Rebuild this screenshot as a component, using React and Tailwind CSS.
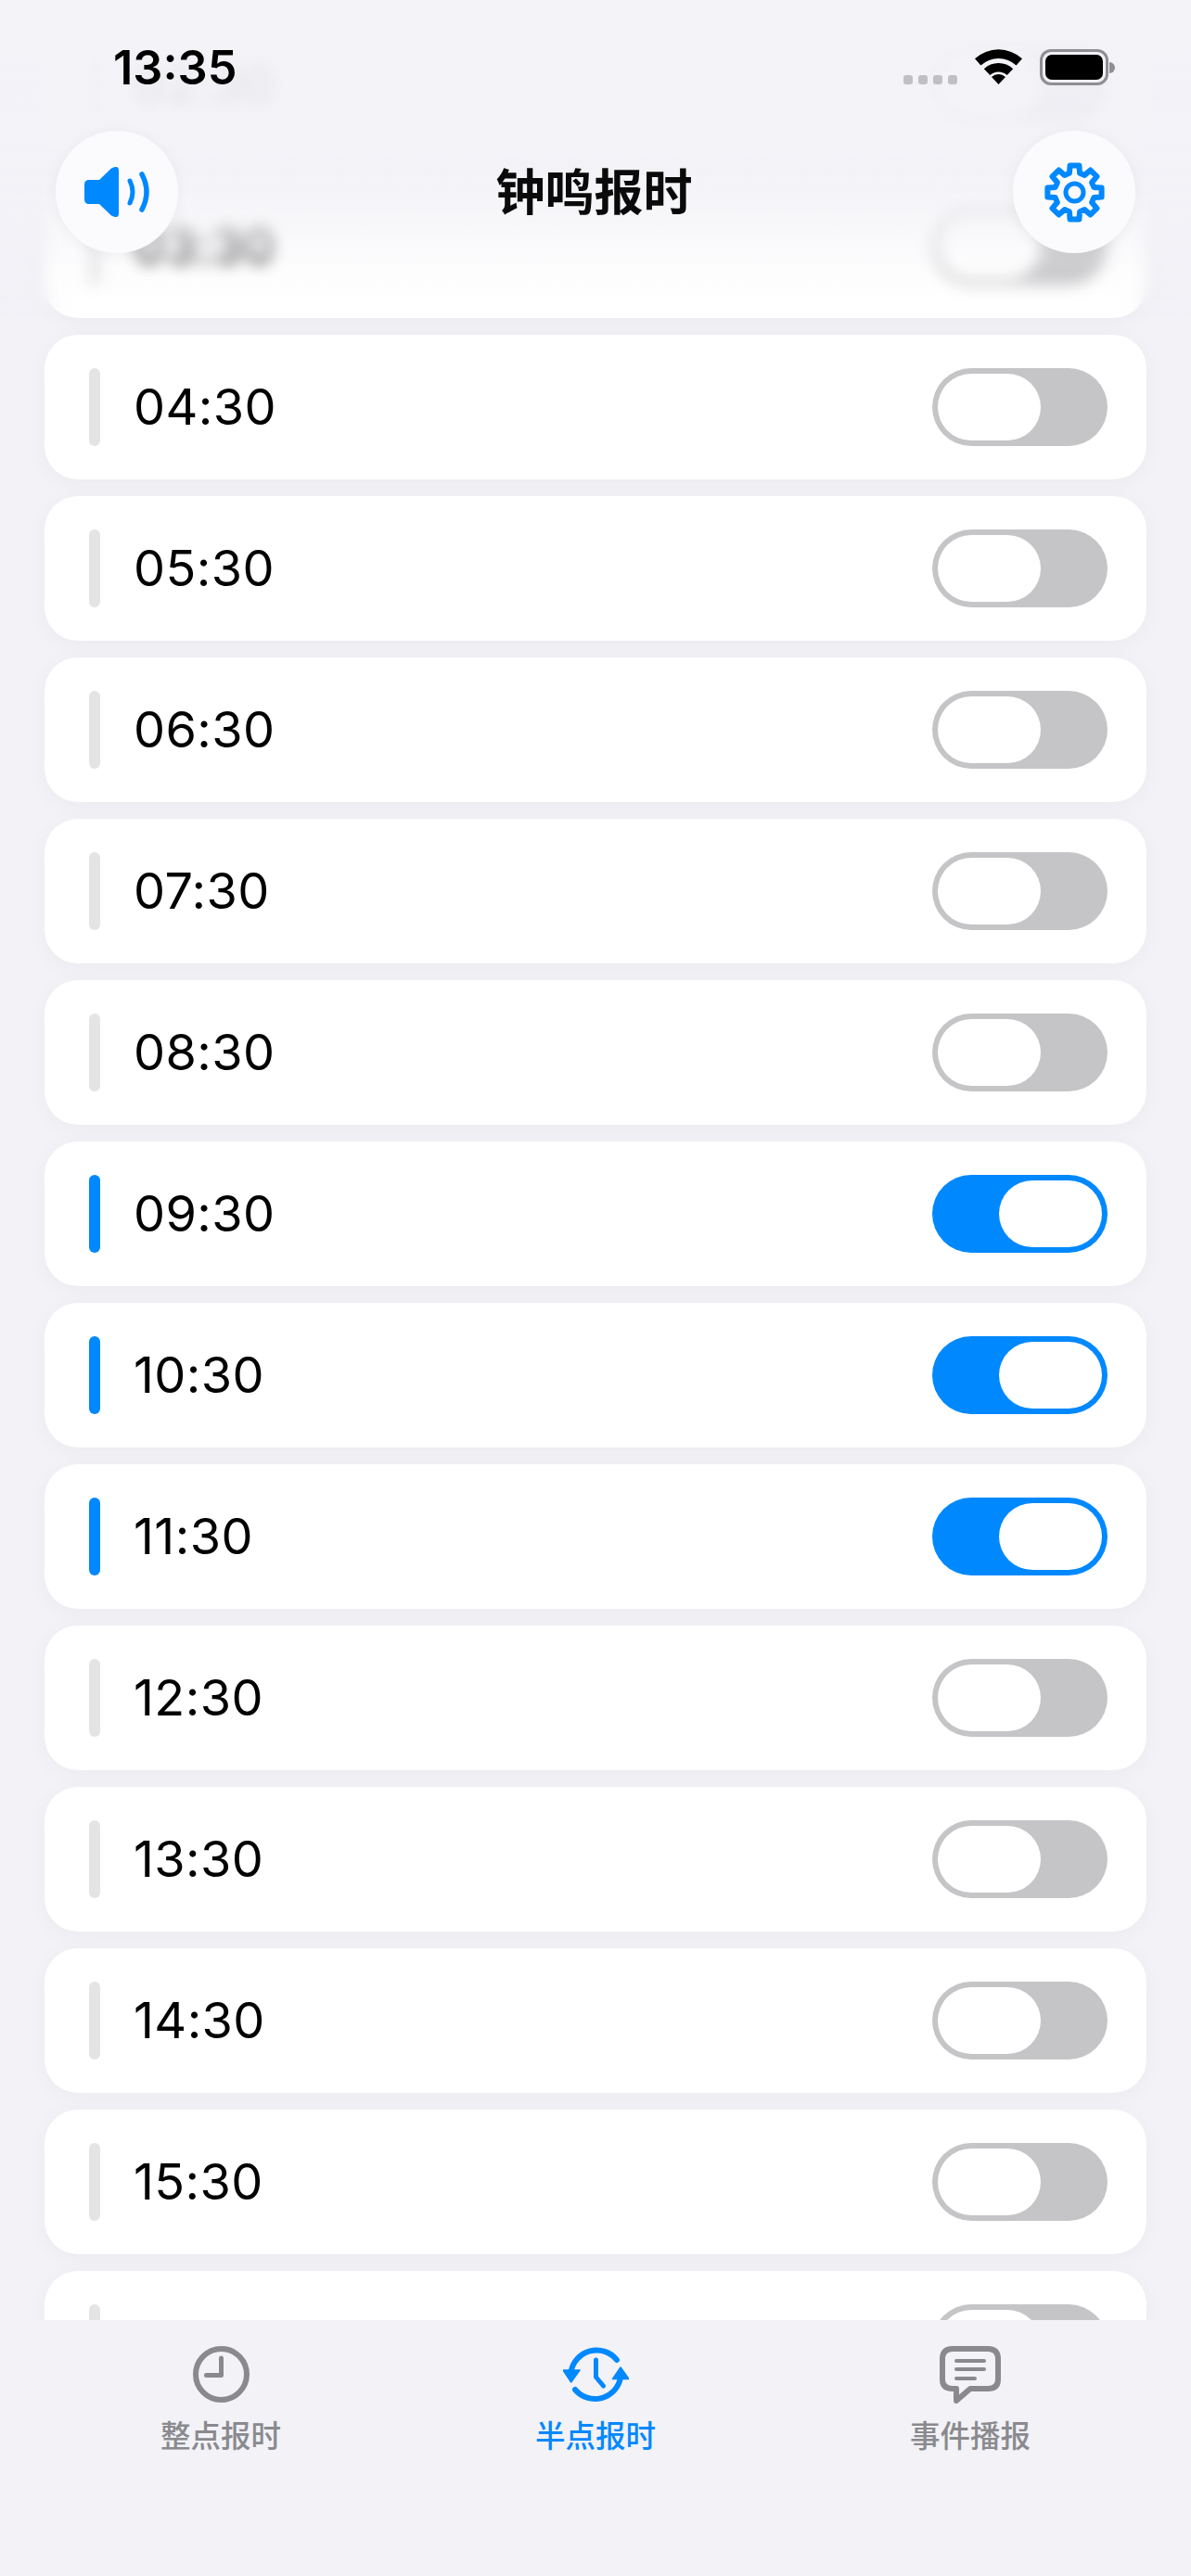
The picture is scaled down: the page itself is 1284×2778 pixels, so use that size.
import React from "react";

const BLUE = "#0088ff";
const rows = [
    { time: "02:30" },
    { time: "03:30" },
    { time: "04:30" },
    { time: "05:30" },
    { time: "06:30" },
    { time: "07:30" },
    { time: "08:30" },
    { time: "09:30", on: true },
    { time: "10:30", on: true },
    { time: "11:30", on: true },
    { time: "12:30" },
    { time: "13:30" },
    { time: "14:30" },
    { time: "15:30" },
    { time: "16:30" },
];

// 8 tooth gear outline, centre line of the stroke
function gearPath(cx, cy) {
    const pts = [];
    for (let i = 0; i < 8; i++) {
        const a = (i * 45 - 90) * (Math.PI / 180);
        const base = 15 * (Math.PI / 180);
        const tip = 9.5 * (Math.PI / 180);
        pts.push([cx + 21.5 * Math.cos(a - base), cy + 21.5 * Math.sin(a - base)]);
        pts.push([cx + 29.5 * Math.cos(a - tip), cy + 29.5 * Math.sin(a - tip)]);
        pts.push([cx + 29.5 * Math.cos(a + tip), cy + 29.5 * Math.sin(a + tip)]);
        pts.push([cx + 21.5 * Math.cos(a + base), cy + 21.5 * Math.sin(a + base)]);
    }
    return "M" + pts.map((p) => p[0].toFixed(1) + " " + p[1].toFixed(1)).join("L") + "Z";
}

function Speaker() {
    return (
        <svg width="71" height="54" viewBox="0 0 71 54" fill="none">
            <path
                d="M5 14H16L29 1.5Q37 -2.5 37 4V50Q37 56.5 29 52.5L16 40H5Q0 40 0 35V19Q0 14 5 14Z"
                fill={BLUE}
            />
            <path d="M49 15Q55 27 49 39" stroke={BLUE} strokeWidth="5" strokeLinecap="round" />
            <path d="M62 8Q72 27 62 46" stroke={BLUE} strokeWidth="5.5" strokeLinecap="round" />
        </svg>
    );
}

function Gear() {
    return (
        <svg width="65" height="65" viewBox="0 0 65 65" fill="none" stroke={BLUE}>
            <path d={gearPath(32.5, 32.5)} strokeWidth="6" strokeLinejoin="round" />
            <circle cx="32.5" cy="32.5" r="9.5" strokeWidth="5" />
        </svg>
    );
}

function Wifi() {
    return (
        <svg width="51" height="38" viewBox="0 0 51 38" fill="#000">
            <path d="M0 10.2A38 38 0 0 1 51 10.2L44.6 17.5A28 28 0 0 0 6.4 17.5Z" />
            <path d="M9.8 21.2A23 23 0 0 1 41.2 21.2L34.7 28.1A13.5 13.5 0 0 0 16.3 28.1Z" />
            <path d="M18 30A11 11 0 0 1 33 30L25.5 38Z" />
        </svg>
    );
}

function ClockIcon() {
    return (
        <svg width="61" height="61" viewBox="0 0 61 61" fill="none" stroke="#8a8a8e" strokeLinecap="round" strokeLinejoin="round">
            <circle cx="30.5" cy="30.5" r="27.5" strokeWidth="6" />
            <path d="M30.5 13V31.5H14.5" strokeWidth="5" />
        </svg>
    );
}

function CycleIcon() {
    return (
        <svg width="71" height="61" viewBox="0 0 71 61" fill="none" stroke={BLUE} strokeLinecap="round" strokeLinejoin="round">
            <path d="M8.5 28A28 28 0 0 1 58 15" strokeWidth="6" />
            <path d="M0 26H18L8.7 39Z" fill={BLUE} strokeWidth="1.5" />
            <path d="M13 47A28 28 0 0 0 62 34" strokeWidth="6" />
            <path d="M53.5 35.5H71L62 23Z" fill={BLUE} strokeWidth="1.5" />
            <path d="M35.5 15V33.5L43.5 43" strokeWidth="5" />
        </svg>
    );
}

function MessageIcon() {
    return (
        <svg width="66" height="62" viewBox="0 0 66 62" fill="none" stroke="#8a8a8e" strokeLinecap="round" strokeLinejoin="round">
            <path
                d="M14 3H52Q63 3 63 14V36Q63 46 52 46H33L18 59V46H14Q3 46 3 36V14Q3 3 14 3Z"
                strokeWidth="6"
            />
            <path d="M18 16H48M18 25H48M18 35H38" strokeWidth="4" />
        </svg>
    );
}

function Toggle({ on }) {
    return (
        <div
            className={`w-[189px] h-[84px] rounded-full p-[6px] flex ${on ? "bg-[#0088ff] justify-end" : "bg-[#c5c5c7] justify-start"}`}
        >
            <div className="w-[111px] h-[72px] rounded-full bg-white" />
        </div>
    );
}

function Row({ time, on }) {
    return (
        <div className="h-[156px] shrink-0 rounded-[36px] bg-white shadow-[0_4px_24px_rgba(0,0,0,0.035)] flex items-center pl-[48px] pr-[42px]">
            <div className={`w-[12px] h-[84px] rounded-full ${on ? "bg-[#0088ff]" : "bg-[#e4e4e6]"}`} />
            <span className="ml-[36px] text-[54px] leading-none font-[430] tracking-[0.4px] text-black">{time}</span>
            <div className="ml-auto">
                <Toggle on={on} />
            </div>
        </div>
    );
}

function TabItem({ icon, label, active }) {
    return (
        <div className="flex-1 flex flex-col items-center">
            <div className="h-[61px] flex items-center justify-center">{icon}</div>
            <span className={`mt-[15px] text-[32.5px] leading-[44px] font-medium ${active ? "text-[#0088ff]" : "text-[#8a8a8e]"}`}>
                {label}
            </span>
        </div>
    );
}

export default function App() {
    return (
        <div className="relative w-[1284px] h-[2778px] overflow-hidden bg-[#f2f2f7] flex flex-col font-['Inter','Noto_Sans_CJK_SC',sans-serif]">
            <main className="h-[2502px] shrink-0 overflow-hidden px-[48px] pt-[13px] flex flex-col gap-[18px]">
                {rows.map((r) => (
                    <Row key={r.time} time={r.time} on={r.on} />
                ))}
            </main>

            <nav className="flex-1 bg-[#f2f2f7] px-[36px] pt-[28px] flex">
                <TabItem icon={<ClockIcon />} label="整点报时" />
                <TabItem icon={<CycleIcon />} label="半点报时" active />
                <TabItem icon={<MessageIcon />} label="事件播报" />
            </nav>

            {/* blurred top bar, lies over the list */}
            <div className="absolute top-0 inset-x-0 h-[342px] backdrop-blur-[8px] [mask-image:linear-gradient(to_bottom,black_93%,transparent_100%)] bg-[linear-gradient(to_bottom,rgba(242,242,247,0.95)_0%,rgba(242,242,247,0.9)_50%,rgba(242,242,247,0.62)_70%,rgba(242,242,247,0.15)_85%,rgba(242,242,247,0)_100%)]" />

            <header className="absolute top-0 inset-x-0">
                <div className="h-[141px] pt-[47px] pl-[122px] pr-[82px] flex items-start">
                    <span className="text-[50.5px] leading-[52px] font-semibold text-black">13:35</span>
                    <div className="ml-auto flex items-start">
                        <div className="mt-[34px] flex gap-[6px]">
                            <span className="w-[10px] h-[10px] rounded-[3px] bg-[#c0c0c4]" />
                            <span className="w-[10px] h-[10px] rounded-[3px] bg-[#c0c0c4]" />
                            <span className="w-[10px] h-[10px] rounded-[3px] bg-[#c0c0c4]" />
                            <span className="w-[10px] h-[10px] rounded-[3px] bg-[#c0c0c4]" />
                        </div>
                        <div className="ml-[19px] mt-[6px]">
                            <Wifi />
                        </div>
                        <div className="ml-[19px] mt-[6px] flex items-center">
                            <div className="w-[74px] h-[39px] rounded-[12px] border-[3px] border-[#8e8e93] p-[3px]">
                                <div className="w-full h-full rounded-[7px] bg-black" />
                            </div>
                            <div className="ml-[1px] w-[6px] h-[12px] rounded-r-full bg-[#8e8e93]" />
                        </div>
                    </div>
                </div>
                <div className="px-[60px] flex items-center justify-between">
                    <button className="w-[132px] h-[132px] rounded-full bg-[#fbfbfe] shadow-[0_2px_16px_rgba(0,0,0,0.05)] flex items-center justify-center">
                        <Speaker />
                    </button>
                    <h1 className="mr-[3px] pt-[2px] text-[53px] leading-none font-bold text-[#0a0a0a]">钟鸣报时</h1>
                    <button className="w-[132px] h-[132px] rounded-full bg-[#fbfbfe] shadow-[0_2px_16px_rgba(0,0,0,0.05)] flex items-center justify-center">
                        <Gear />
                    </button>
                </div>
            </header>
        </div>
    );
}
